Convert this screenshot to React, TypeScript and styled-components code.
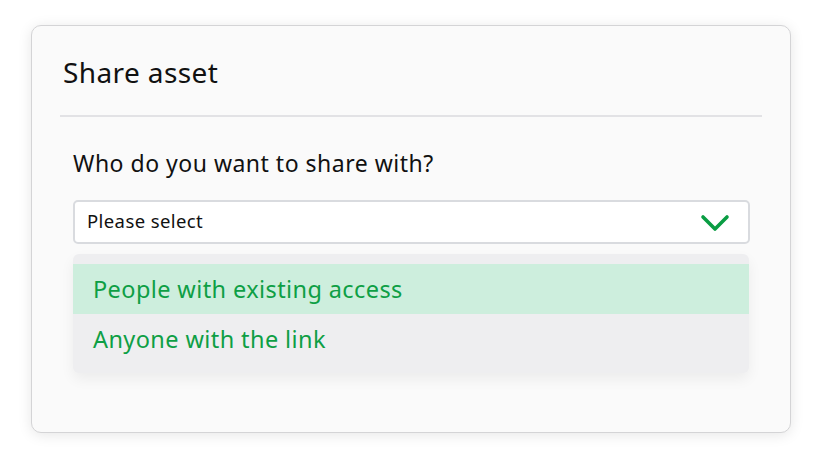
import styled, { createGlobalStyle } from "styled-components";

const GlobalStyle = createGlobalStyle`
  html, body {
    margin: 0;
    padding: 0;
    background: #ffffff;
  }
  body {
    font-family: "Noto Sans", Lato, "Liberation Sans", sans-serif;
    color: #111111;
  }
`;

const Page = styled.div`
  width: 821px;
  height: 469px;
  padding: 25px 0 0 31px;
  box-sizing: border-box;
`;

const Card = styled.section`
  width: 760px;
  height: 408px;
  box-sizing: border-box;
  background: #fafafa;
  border: 1px solid #d4d4d6;
  border-radius: 10px;
  box-shadow: 0 2px 14px rgba(0, 0, 0, 0.1);
  padding: 0 28px;
`;

const Title = styled.h2`
  margin: 0;
  padding: 28px 0 0 3px;
  height: 91px;
  box-sizing: border-box;
  font-size: 28px;
  line-height: 36px;
  letter-spacing: 0.4px;
  font-weight: 400;
  color: #111111;
  border-bottom: 2px solid #e2e2e5;
`;

const Body = styled.div`
  padding: 31px 12px 0 13px;
  display: flex;
  flex-direction: column;
`;

const Question = styled.label`
  font-size: 23px;
  line-height: 30px;
  letter-spacing: 0.5px;
  color: #111111;
`;

const Select = styled.div`
  margin-top: 22px;
  height: 44px;
  box-sizing: border-box;
  background: #ffffff;
  border: 2px solid #d9dbdf;
  border-radius: 5px;
  display: flex;
  align-items: center;
  justify-content: space-between;
  padding: 0 18px 3px 12px;
  font-size: 18.5px;
  letter-spacing: 0.4px;
  color: #111111;
`;

const Menu = styled.ul`
  list-style: none;
  margin: 10px 1px 0 0;
  padding: 10px 0 9px;
  background: #eeeef0;
  border-radius: 6px;
  box-shadow: 0 6px 14px rgba(0, 0, 0, 0.06);
`;

const Option = styled.li<{ active?: boolean }>`
  height: 50px;
  display: flex;
  align-items: center;
  padding-left: 20px;
  font-size: 23.5px;
  letter-spacing: 0.4px;
  color: #0e9f45;
  background: ${(p) => (p.active ? "#cdeedd" : "transparent")};
`;

const ChevronIcon = styled.svg`
  margin-top: 3px;
`;

const Chevron = () => (
  <ChevronIcon width="30" height="20" viewBox="0 0 30 20" fill="none">
    <path
      d="M3 5 L15 17 L27 5"
      stroke="#0a9d43"
      strokeWidth="3.6"
      strokeLinecap="round"
      strokeLinejoin="round"
    />
  </ChevronIcon>
);

export default function App() {
  return (
    <Page>
      <GlobalStyle />
      <Card>
        <Title>Share asset</Title>
        <Body>
          <Question>Who do you want to share with?</Question>
          <Select>
            <span>Please select</span>
            <Chevron />
          </Select>
          <Menu>
            <Option active>People with existing access</Option>
            <Option>Anyone with the link</Option>
          </Menu>
        </Body>
      </Card>
    </Page>
  );
}
